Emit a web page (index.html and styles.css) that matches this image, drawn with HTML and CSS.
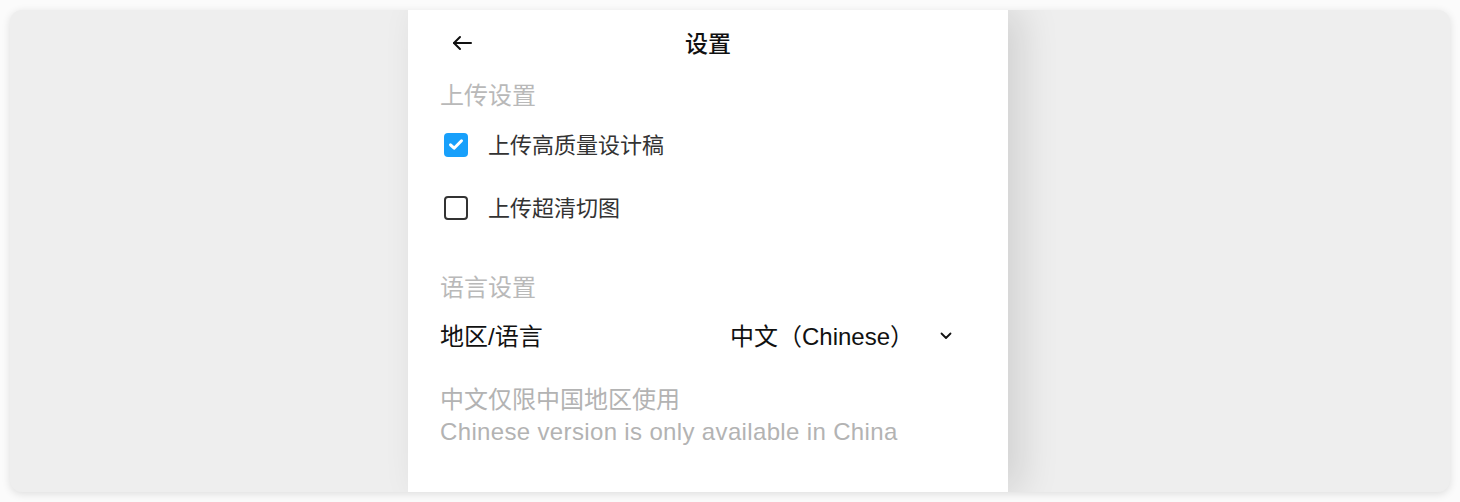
FILE: index.html
```html
<!DOCTYPE html>
<html lang="zh-CN">
<head>
  <meta charset="UTF-8">
  <title>设置</title>
  <link rel="stylesheet" href="styles.css">
</head>
<body>
  <div class="frame">
    <section class="panel">
      <!-- Header -->
      <header class="panel-header">
        <button class="back-button" aria-label="返回">
          <svg width="22" height="16" viewBox="0 0 22 16" fill="none" stroke="#111" stroke-width="2" stroke-linecap="round" stroke-linejoin="round">
            <path d="M20 8H3"/>
            <path d="M9 2L3 8l6 6"/>
          </svg>
        </button>
        <h1 class="title">设置</h1>
        <span></span>
      </header>

      <!-- Upload settings -->
      <h2 class="section-title">上传设置</h2>
      <label class="check-row">
        <span class="checkbox checked">
          <svg width="16" height="13" viewBox="0 0 16 13" fill="none" stroke="#fff" stroke-width="3" stroke-linecap="round" stroke-linejoin="round">
            <path d="M2.5 6.8l3.6 3.4L13.5 2.8"/>
          </svg>
        </span>
        <span class="check-label">上传高质量设计稿</span>
      </label>
      <label class="check-row">
        <span class="checkbox"></span>
        <span class="check-label">上传超清切图</span>
      </label>

      <!-- Language settings -->
      <h2 class="section-title lang-title">语言设置</h2>
      <div class="select-row">
        <span class="select-label">地区/语言</span>
        <div class="select">
          <span class="select-value">中文（Chinese）</span>
          <svg class="chevron" width="12" height="8" viewBox="0 0 12 8" fill="none" stroke="#111" stroke-width="1.8" stroke-linecap="round" stroke-linejoin="round">
            <path d="M1.5 1.5L6 6l4.5-4.5"/>
          </svg>
        </div>
      </div>

      <p class="note">中文仅限中国地区使用<br><span class="note-en">Chinese version is only available in China</span></p>
    </section>
  </div>
</body>
</html>
```

FILE: styles.css
```css
/* General */
body {
  margin: 0;
  padding: 10px;
  background-color: #fbfbfb;
  font-family: "Liberation Sans", "Noto Sans CJK SC", sans-serif;
  color: #222;
}

.frame {
  height: 482px;
  background-color: #eeeeee;
  border-radius: 12px;
  overflow: hidden;
  box-shadow: 0 2px 8px rgba(0, 0, 0, 0.12);
  display: flex;
}

/* Settings panel */
.panel {
  width: 600px;
  margin-left: 398px;
  padding: 0 56px 0 32px;
  box-sizing: border-box;
  background-color: #fff;
  box-shadow: 14px 0 36px rgba(0, 0, 0, 0.12);
}

.panel-header {
  height: 66px;
  display: grid;
  grid-template-columns: 1fr auto 1fr;
  align-items: center;
  margin-right: -24px;
}

.back-button {
  justify-self: start;
  margin-left: 11px;
  padding: 0 0 0;
  border: none;
  background: none;
  display: flex;
  cursor: pointer;
}

.title {
  margin: 0;
  padding-bottom: 2px;
  font-size: 23px;
  font-weight: 500;
  color: #111;
}

.section-title {
  margin: 4px 0 0;
  font-size: 24px;
  line-height: 32px;
  font-weight: normal;
  color: #b9b9b9;
}

.lang-title {
  margin-top: 33px;
}

/* Checkboxes */
.check-row {
  height: 63px;
  display: flex;
  align-items: center;
  gap: 20px;
  padding-left: 4px;
}

.check-row:first-of-type {
  margin-top: 1px;
}

.checkbox {
  width: 24px;
  height: 24px;
  box-sizing: border-box;
  border: 2px solid #333;
  border-radius: 4px;
  display: flex;
  align-items: center;
  justify-content: center;
}

.checkbox.checked {
  border: none;
  background-color: #18a0fb;
}

.check-label {
  padding-bottom: 3px;
  font-size: 22px;
  color: #333;
}

/* Region select */
.select-row {
  height: 48px;
  margin-top: 8px;
  display: grid;
  grid-template-columns: 290px 1fr;
  align-items: center;
  font-size: 24px;
  color: #111;
}

.select-label,
.select-value {
  padding-bottom: 3px;
}

.select {
  display: flex;
  align-items: center;
}

.chevron {
  margin-left: auto;
}

.note {
  margin: 24px 0 0;
  font-size: 24px;
  line-height: 32px;
  color: #b3b3b3;
}

.note-en {
  letter-spacing: 0.35px;
}
```
